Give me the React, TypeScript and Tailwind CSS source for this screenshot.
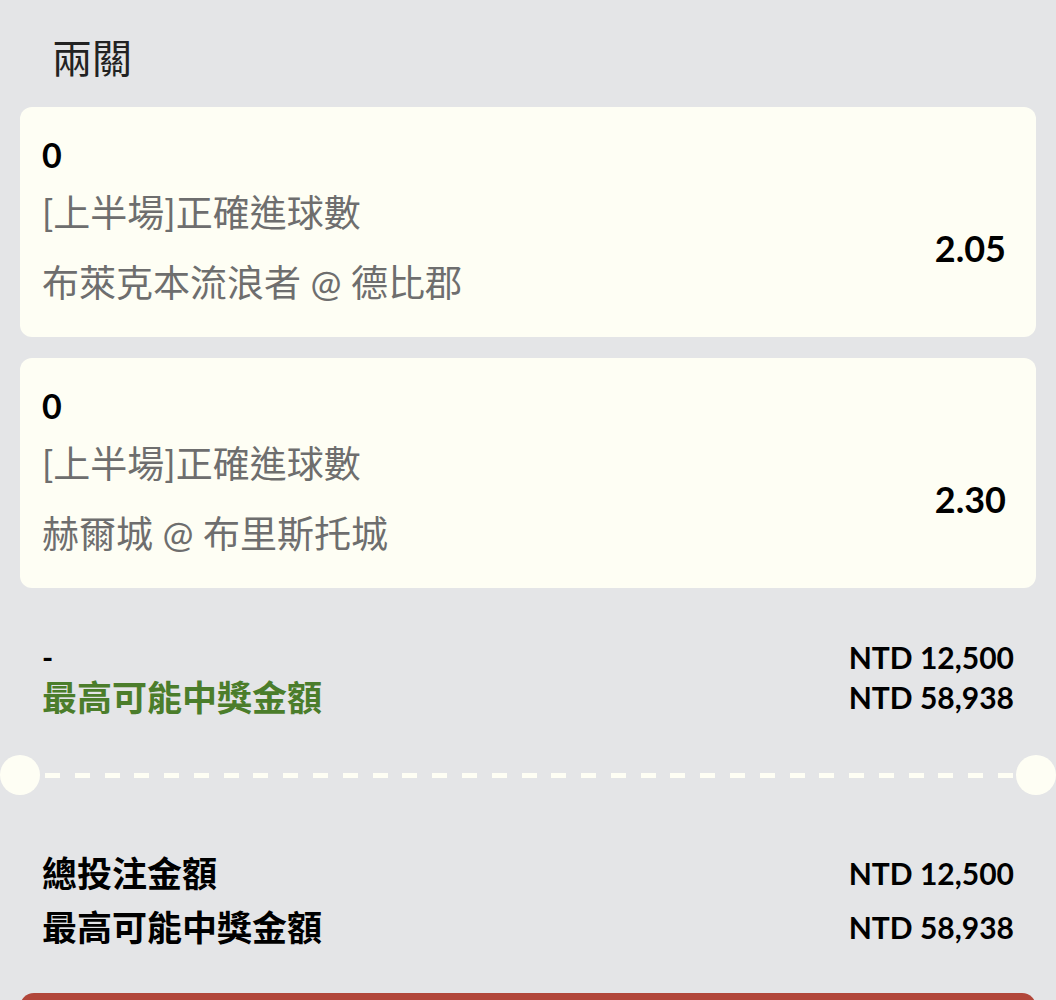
const legs = [
  { pick: "0", market: "[上半場]正確進球數", match: "布萊克本流浪者 @ 德比郡", odds: "2.05" },
  { pick: "0", market: "[上半場]正確進球數", match: "赫爾城 @ 布里斯托城", odds: "2.30" },
];

function LegCard({ pick, market, match, odds }: (typeof legs)[number]) {
  return (
    <div className="flex h-[230px] justify-between rounded-[12px] bg-[#fefef4] pl-[22px] pr-[30px]">
      <div className="pt-[28px]">
        <div className="text-[34px] font-bold leading-[40px] text-black">{pick}</div>
        <div className="mt-[12px] text-[37px] leading-[52px] text-[#6e6e6e]">{market}</div>
        <div className="mt-[18px] text-[37px] leading-[52px] text-[#6e6e6e]">{match}</div>
      </div>
      <div className="pt-[121px] text-[36px] font-bold leading-[40px] text-black">{odds}</div>
    </div>
  );
}

export default function App() {
  return (
    <div className="min-h-screen w-[1056px] overflow-hidden bg-[#e4e5e7] font-['Lato','Noto_Sans_CJK_TC',sans-serif]">
      <div className="px-[20px]">
        <h1 className="pl-[32px] pt-[38px] text-[40px] font-normal leading-[40px] text-[#222]">兩關</h1>
        <div className="mt-[29px] flex flex-col gap-[21px]">
          {legs.map((leg, i) => (
            <LegCard key={i} {...leg} />
          ))}
        </div>
      </div>

      <div className="mt-[49px] px-[42px]">
        <div className="flex items-center justify-between leading-[40px]">
          <span className="text-[30px] font-bold text-black">-</span>
          <span className="text-[30px] font-bold text-black">NTD 12,500</span>
        </div>
        <div className="flex items-center justify-between leading-[40px]">
          <span className="text-[35px] font-bold text-[#4b7d2b]">最高可能中獎金額</span>
          <span className="text-[30px] font-bold text-black">NTD 58,938</span>
        </div>
      </div>

      <div className="mt-[38px] flex h-[40px] items-center">
        <div className="h-[40px] w-[40px] shrink-0 rounded-full bg-[#fefef4]" />
        <div className="flex flex-1 items-center justify-between overflow-hidden pl-[5px] pr-[3px]">
          {Array.from({ length: 33 }).map((_, i) => (
            <div key={i} className="h-[5px] w-[15px] shrink-0 bg-[#fefef4]" />
          ))}
        </div>
        <div className="h-[40px] w-[40px] shrink-0 rounded-full bg-[#fefef4]" />
      </div>

      <div className="mt-[51px] px-[42px]">
        <div className="flex items-center justify-between leading-[54px]">
          <span className="text-[35px] font-bold text-black">總投注金額</span>
          <span className="text-[30px] font-bold text-black">NTD 12,500</span>
        </div>
        <div className="flex items-center justify-between leading-[54px]">
          <span className="text-[35px] font-bold text-black">最高可能中獎金額</span>
          <span className="text-[30px] font-bold text-black">NTD 58,938</span>
        </div>
      </div>

      <div className="mt-[39px] px-[20px]">
        <div className="h-[60px] rounded-t-[14px] bg-[#b1463a]" />
      </div>
    </div>
  );
}
